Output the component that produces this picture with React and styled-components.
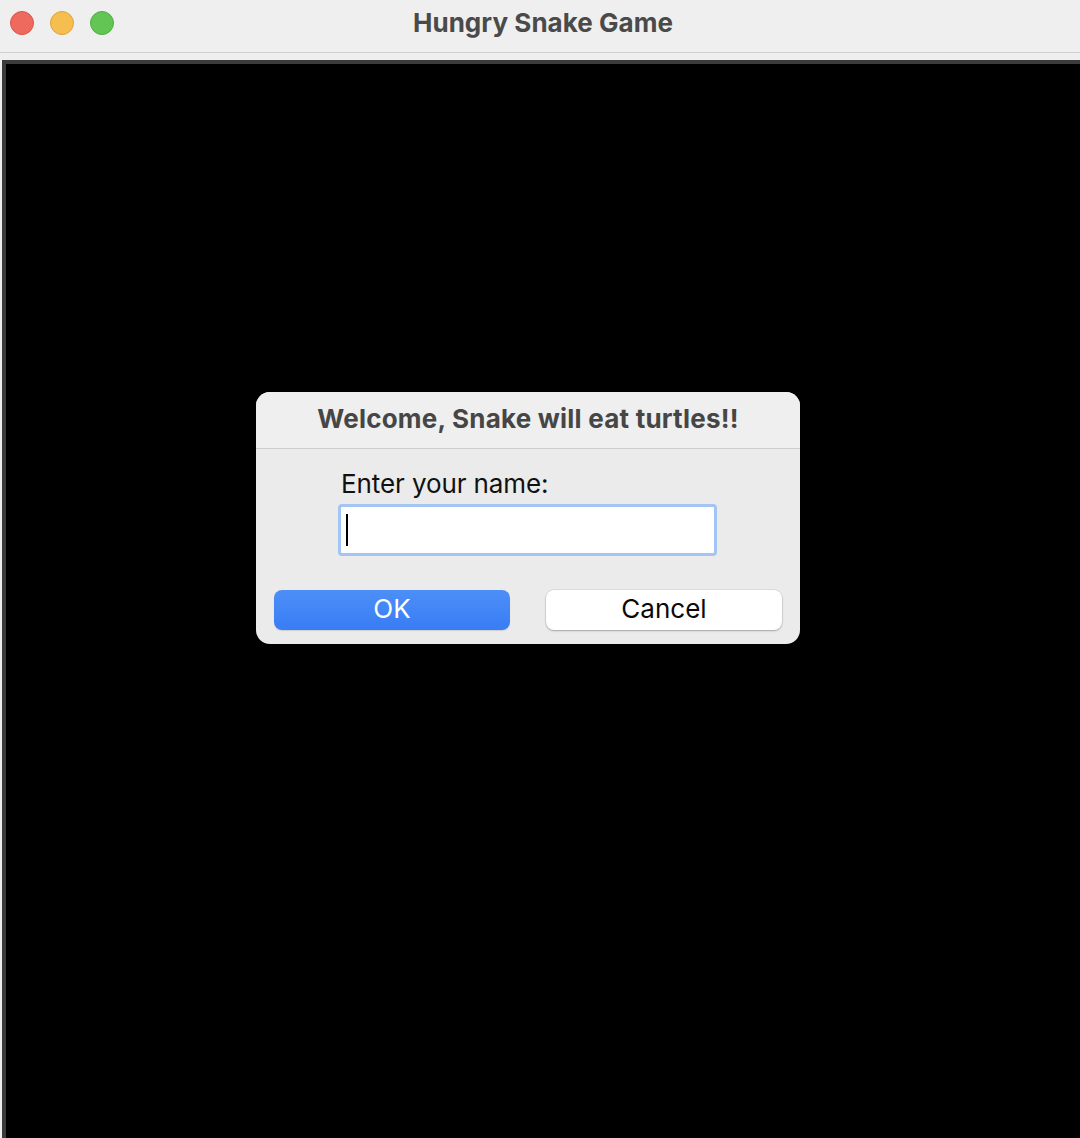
import React from "react";
import styled, { createGlobalStyle } from "styled-components";

const Global = createGlobalStyle`
  html, body {
    margin: 0;
    padding: 0;
    width: 1080px;
    height: 1138px;
    overflow: hidden;
    background: #efefef;
    font-family: Inter, "Open Sans", "Liberation Sans", sans-serif;
  }
  * { box-sizing: border-box; }
`;

const Window = styled.div`
  width: 1080px;
  height: 1138px;
  display: flex;
  flex-direction: column;
  background: #efefef;
`;

const TitleBar = styled.div`
  position: relative;
  height: 53px;
  flex: none;
  display: flex;
  justify-content: center;
  padding-top: 7px;
  background: #efefef;
  border-bottom: 1px solid #cfcfcf;
`;

const Lights = styled.div`
  position: absolute;
  left: 10px;
  top: 11px;
  display: flex;
  gap: 16px;
`;

const Light = styled.span`
  width: 24px;
  height: 24px;
  border-radius: 50%;
  background: ${(p) => p.$c};
  border: 1px solid ${(p) => p.$b};
`;

const WindowTitle = styled.div`
  font-size: 26px;
  line-height: 32px;
  font-weight: 700;
  color: #4a4a4a;
  margin-left: 6px;
  letter-spacing: 0.05px;
`;

const Content = styled.div`
  flex: 1;
  display: flex;
  padding: 7px 0 0 2px;
  background: #efefef;
`;

const Canvas = styled.div`
  position: relative;
  flex: 1;
  background: #000;
  border-top: 4px solid #3b3b3b;
  border-left: 4px solid #3b3b3b;
`;

const Dialog = styled.div`
  position: absolute;
  left: 250px;
  top: 328px;
  width: 544px;
  border-radius: 14px;
  overflow: hidden;
  background: #ebebeb;
  display: flex;
  flex-direction: column;
`;

const DialogHeader = styled.div`
  height: 57px;
  padding-top: 11px;
  background: #efefef;
  border-bottom: 1px solid #cdcdcd;
  text-align: center;
  font-size: 26px;
  line-height: 32px;
  font-weight: 700;
  color: #464646;
  letter-spacing: 0.22px;
`;

const DialogBody = styled.div`
  display: flex;
  flex-direction: column;
  padding: 19px 18px 14px;
`;

const Label = styled.div`
  margin-left: 67px;
  font-size: 26px;
  line-height: 32px;
  color: #111;
  letter-spacing: -0.1px;
`;

const Field = styled.div`
  margin-top: 4px;
  margin-left: 64px;
  width: 379px;
  height: 52px;
  border: 3px solid #a4c4f3;
  border-radius: 4px;
  background: #fff;
  padding: 7px 0 0 5px;
`;

const Caret = styled.span`
  display: block;
  width: 2px;
  height: 32px;
  background: #000;
`;

const Buttons = styled.div`
  margin-top: 34px;
  display: flex;
  gap: 36px;
`;

const Button = styled.div`
  flex: 1;
  height: 40px;
  border-radius: 8px;
  text-align: center;
  font-size: 26px;
  line-height: 37px;
  padding-bottom: 3px;
  color: ${(p) => (p.$primary ? "#fff" : "#0a0a0a")};
  background: ${(p) =>
    p.$primary ? "linear-gradient(#4d8ff8, #397cf4)" : "#fff"};
  box-shadow: ${(p) =>
    p.$primary
      ? "0 1px 1px rgba(0,0,0,0.12)"
      : "0 0 0 0.5px rgba(0,0,0,0.12), 0 1px 2px rgba(0,0,0,0.25)"};
`;

export default function App() {
  return (
    <>
      <Global />
      <Window>
        <TitleBar>
          <Lights>
            <Light $c="#ee6a5f" $b="#d9554b" />
            <Light $c="#f6be4f" $b="#dea33a" />
            <Light $c="#62c554" $b="#4fae43" />
          </Lights>
          <WindowTitle>Hungry Snake Game</WindowTitle>
        </TitleBar>
        <Content>
          <Canvas>
            <Dialog>
              <DialogHeader>Welcome, Snake will eat turtles!!</DialogHeader>
              <DialogBody>
                <Label>Enter your name:</Label>
                <Field>
                  <Caret />
                </Field>
                <Buttons>
                  <Button $primary>OK</Button>
                  <Button>Cancel</Button>
                </Buttons>
              </DialogBody>
            </Dialog>
          </Canvas>
        </Content>
      </Window>
    </>
  );
}
